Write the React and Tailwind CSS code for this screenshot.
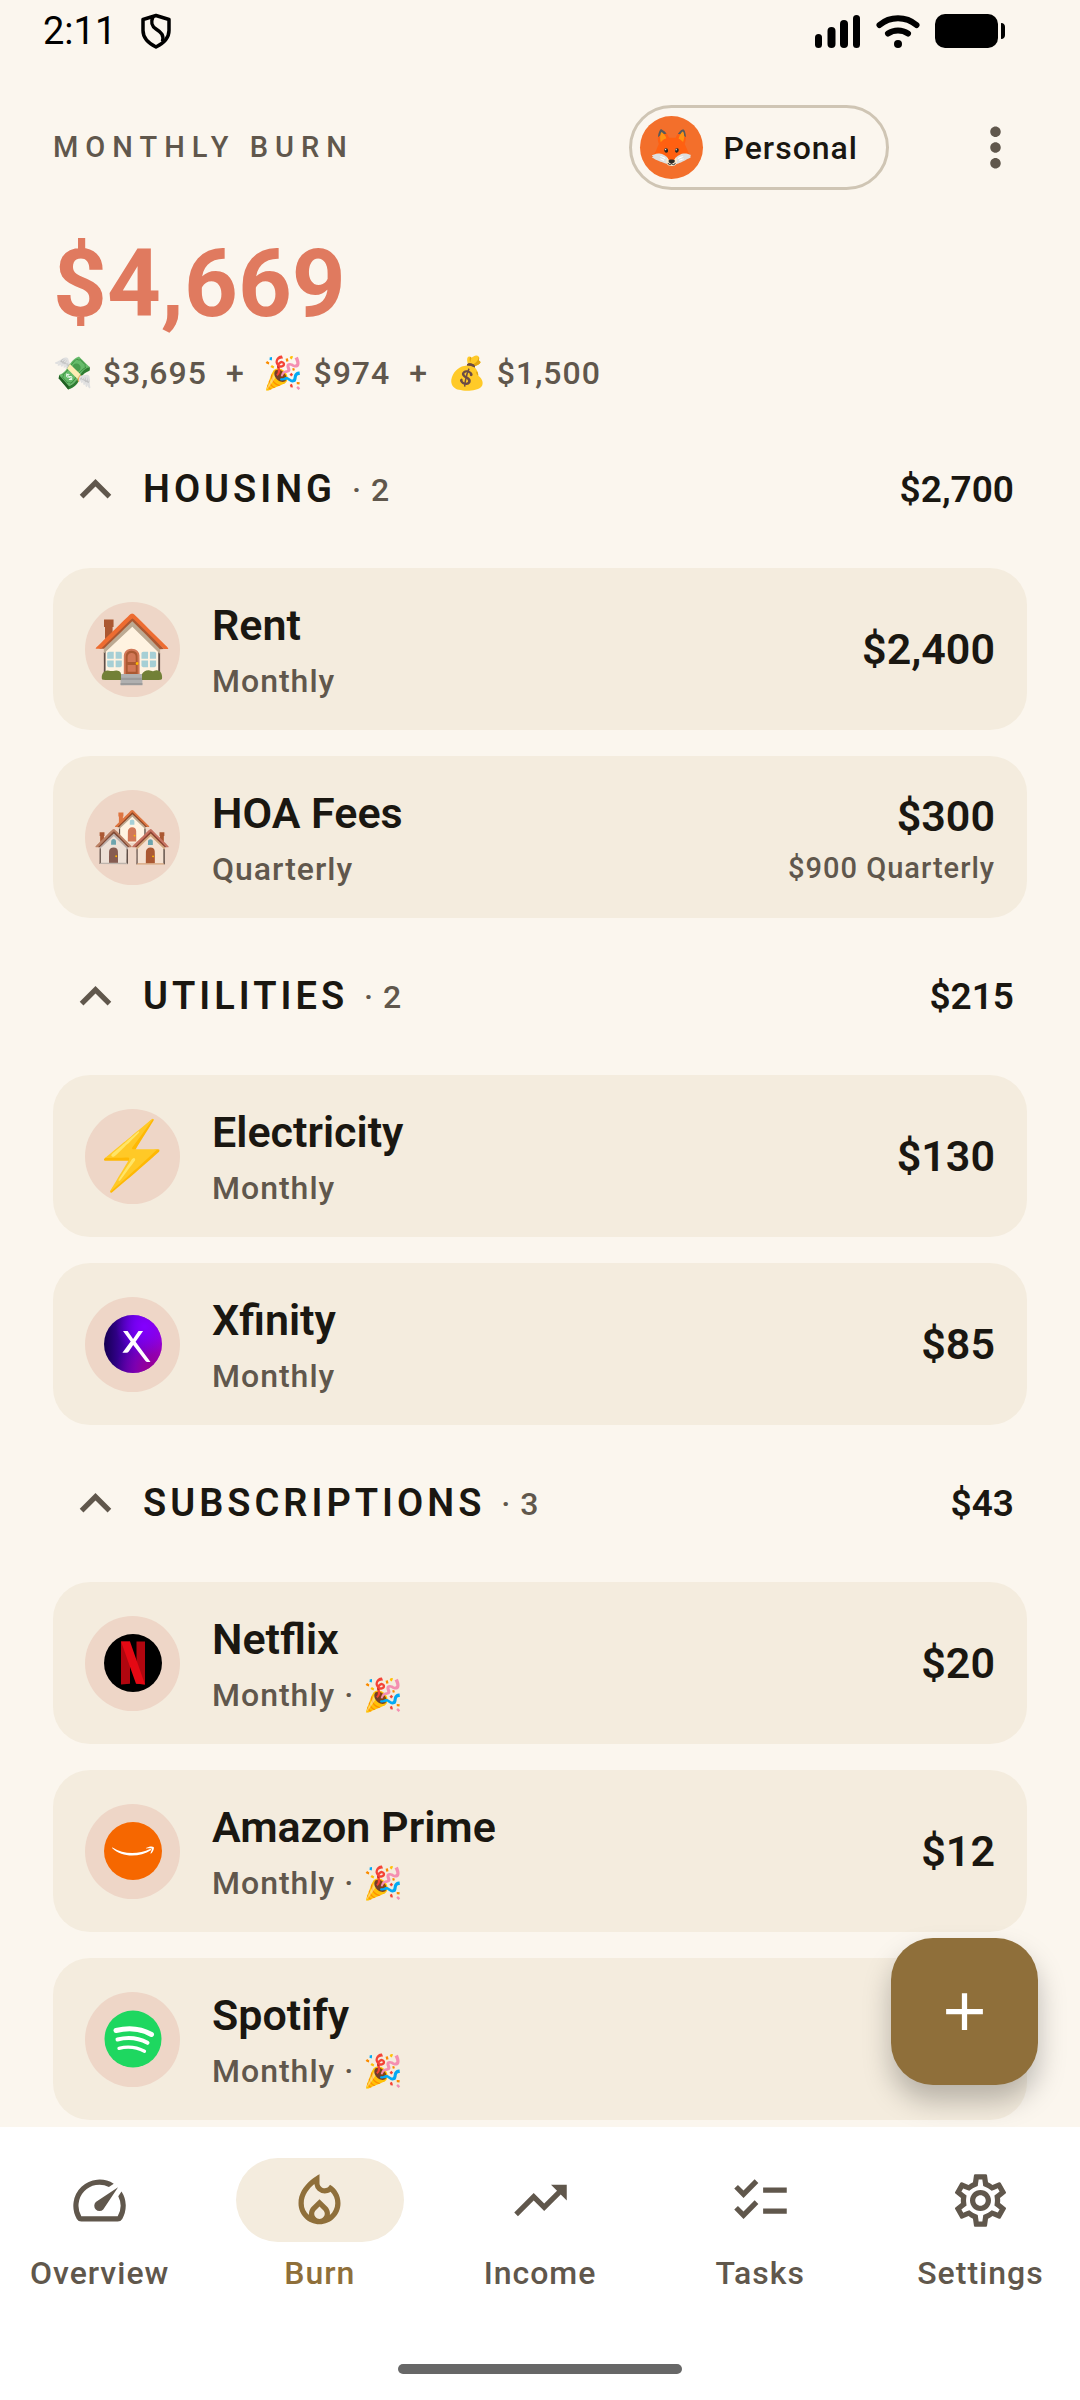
import { useState } from 'react';
import {
    MdAdd,
    MdChecklist,
    MdExpandLess,
    MdMoreVert,
    MdOutlineLocalFireDepartment,
    MdOutlineSettings,
    MdOutlineSpeed,
    MdTrendingUp,
} from 'react-icons/md';

const emojiFont = "font-['Noto_Color_Emoji',sans-serif]";

// Brand logos
function XfinityLogo() {
    return (
        <svg className="size-[58px]" viewBox="0 0 58 58" aria-hidden="true">
            <defs>
                <linearGradient id="xf-base" x1="0" y1="0" x2="1" y2="0">
                    <stop offset="0" stopColor="#140050" />
                    <stop offset="0.55" stopColor="#5a00d8" />
                    <stop offset="1" stopColor="#9a00d0" />
                </linearGradient>
                <radialGradient id="xf-glow" cx="0.7" cy="0.2" r="0.5">
                    <stop offset="0" stopColor="#8400ff" />
                    <stop offset="1" stopColor="#8400ff" stopOpacity="0" />
                </radialGradient>
                <radialGradient id="xf-pink" cx="0.8" cy="0.95" r="0.6">
                    <stop offset="0" stopColor="#9a0090" />
                    <stop offset="1" stopColor="#9a0090" stopOpacity="0" />
                </radialGradient>
            </defs>
            <circle cx="29" cy="29" r="29" fill="url(#xf-base)" />
            <circle cx="29" cy="29" r="29" fill="url(#xf-pink)" />
            <circle cx="29" cy="29" r="29" fill="url(#xf-glow)" />
            <path d="M19 16h4.600l5.500 8 5.400-8h4.600l-7.500 10.800L46.500 47h-3.200a2 2 0 0 1-1.600-.8L29.200 30l-4.400 6.500a3 3 0 0 1-2.400 1.300h-4l8.300-11.300z" fill="#fff" />
        </svg>
    );
}

function NetflixLogo() {
    return (
        <svg className="size-[58px]" viewBox="0 0 58 58" aria-hidden="true">
            <circle cx="29" cy="29" r="29" fill="#000" />
            <path d="M17 7.500h9v42.300l-9 .7zM32.500 7.500H41v43l-8.500-.7z" fill="#b1060f" />
            <path d="M17 7.500h9l15 43c-3-.4-6-.6-9-.7z" fill="#e50914" />
        </svg>
    );
}

function AmazonLogo() {
    return (
        <svg className="size-[58px]" viewBox="0 0 58 58" aria-hidden="true">
            <circle cx="29" cy="29" r="29" fill="#f66700" />
            <path d="M8.500 25.500c11 6.800 25 7.600 38 1.200l.8 1.200C35 36 18 35.500 8.300 26.300c-.4-.5-.2-1 .2-.8z" fill="#fff" />
            <path d="M42 26c2.500-1.800 6.500-2 7.600-1.100.9 1-.3 4.700-2.600 6.700-.4.300-.7.100-.5-.3.700-1.700 1.600-4 1.200-4.700-.6-.7-3.400-.4-5.300-.2-.5 0-.7-.2-.4-.4z" fill="#fff" />
        </svg>
    );
}

function SpotifyLogo() {
    return (
        <svg className="size-[58px]" viewBox="0 0 58 58" aria-hidden="true">
            <circle cx="29" cy="29" r="28.500" fill="#1ed760" />
            <g fill="none" stroke="#fff" strokeLinecap="round">
                <path d="M12 20.500c12-3 25-2 35.500 4" strokeWidth="5" />
                <path d="M13.500 29.500c10-2.500 21-1.500 30 3.300" strokeWidth="4" />
                <path d="M15 38.300c8.500-2 17.500-1.300 25.500 3" strokeWidth="3.300" />
            </g>
        </svg>
    );
}

const sections = [
    {
        name: 'Housing',
        total: '$2,700',
        items: [
            { name: 'Rent', cycle: 'Monthly', amount: '$2,400', emoji: '🏠' },
            { name: 'HOA Fees', cycle: 'Quarterly', amount: '$300', note: '$900 Quarterly', emoji: '🏘️' },
        ],
    },
    {
        name: 'Utilities',
        total: '$215',
        items: [
            { name: 'Electricity', cycle: 'Monthly', amount: '$130', emoji: '⚡' },
            { name: 'Xfinity', cycle: 'Monthly', amount: '$85', logo: <XfinityLogo /> },
        ],
    },
    {
        name: 'Subscriptions',
        total: '$43',
        items: [
            { name: 'Netflix', cycle: 'Monthly', fun: true, amount: '$20', logo: <NetflixLogo /> },
            { name: 'Amazon Prime', cycle: 'Monthly', fun: true, amount: '$12', logo: <AmazonLogo /> },
            { name: 'Spotify', cycle: 'Monthly', fun: true, amount: '$11', logo: <SpotifyLogo /> },
        ],
    },
];

const tabs = [
    { label: 'Overview', icon: <MdOutlineSpeed className="size-[63px]" /> },
    { label: 'Burn', icon: <MdOutlineLocalFireDepartment className="size-[63px]" /> },
    { label: 'Income', icon: <MdTrendingUp className="size-[63px]" /> },
    { label: 'Tasks', icon: <MdChecklist className="size-[63px]" /> },
    { label: 'Settings', icon: <MdOutlineSettings className="size-[63px]" /> },
];

function StatusBar() {
    return (
        <div className="flex h-[62px] items-center pr-[75px] pl-[43px] text-black">
            <span className="text-[38px] leading-none">2:11</span>
            <svg className="ml-6 h-9 w-8" viewBox="0 0 32 36" fill="none" stroke="currentColor" strokeWidth="3.500" strokeLinejoin="round" aria-hidden="true">
                <path d="M16 2.500 29 6.500v11c0 7-5 12.500-13 16.500C8 30 3 24.500 3 17.500v-11z" />
                <path d="M13 3.500c-2.500 6-1.500 9.500 3 12.500 5.500 3.500 8 6 6.500 12.500" />
            </svg>
            <div className="ml-auto flex items-center gap-[15px]">
                <svg className="h-9 w-[46px]" viewBox="0 0 46 36" fill="currentColor" aria-hidden="true">
                    <rect x="0" y="21" width="7" height="14" rx="3.500" />
                    <rect x="12.500" y="14" width="8" height="21" rx="4" />
                    <rect x="25" y="7" width="8" height="28" rx="4" />
                    <rect x="38" y="2" width="7" height="33" rx="3.500" />
                </svg>
                <svg className="h-9 w-11" viewBox="0 0 44 36" fill="none" stroke="currentColor" strokeWidth="6" strokeLinecap="round" aria-hidden="true">
                    <path d="M3.500 12C14 3 30 3 40.500 12" />
                    <path d="M12 20.500c6-4 14-4 20 0" />
                    <circle cx="22" cy="31" r="4" fill="currentColor" stroke="none" />
                </svg>
                <svg className="h-9 w-[70px]" viewBox="0 0 70 36" fill="currentColor" aria-hidden="true">
                    <rect x="0" y="1" width="63" height="34" rx="10" />
                    <path d="M66 10c3 0 4 2 4 4v8c0 2-1 4-4 4z" />
                </svg>
            </div>
        </div>
    );
}

function ExpenseCard({ item }) {
    return (
        <li className="flex min-h-[162px] items-center gap-8 rounded-[37px] bg-[#f4ecde] px-8">
            <div className="flex size-[95px] shrink-0 items-center justify-center rounded-full bg-[#eed6c7]">
                {item.logo || <span className={`${emojiFont} text-[66px] leading-none`}>{item.emoji}</span>}
            </div>
            <div className="flex-1">
                <h3 className="text-[43px] leading-[64px] font-semibold text-[#1a1711]">{item.name}</h3>
                <p className="text-[32px] leading-[48px] font-medium tracking-[1px] text-[#60574c]">
                    {item.cycle}
                    {item.fun && (
                        <>
                            {' · '}
                            <span className={emojiFont}>🎉</span>
                        </>
                    )}
                </p>
            </div>
            <div className="text-right">
                <p className="text-[43px] leading-[62px] font-semibold text-[#1a1711]">{item.amount}</p>
                {item.note && (
                    <p className="text-[29px] leading-[42px] font-medium tracking-[1px] text-[#60574c]">{item.note}</p>
                )}
            </div>
        </li>
    );
}

function Section({ section }) {
    const [open, setOpen] = useState(true);

    return (
        <section>
            <button
                type="button"
                aria-expanded={open}
                onClick={() => setOpen(!open)}
                className="flex h-[157px] w-full items-center pr-[13px] pl-[11px] text-left"
            >
                <MdExpandLess className={open ? 'size-[63px] text-[#60574c]' : 'size-[63px] rotate-180 text-[#60574c]'} />
                <span className="ml-4 text-[38px] font-semibold tracking-[4px] text-[#1a1711] uppercase">{section.name}</span>
                <span className="ml-4 text-[32px] font-medium tracking-[1px] text-[#60574c]">· {section.items.length}</span>
                <span className="ml-auto text-[37px] font-semibold text-[#1a1711]">{section.total}</span>
            </button>
            {open && (
                <ul className="flex flex-col gap-[26px]">
                    {section.items.map((item) => (
                        <ExpenseCard key={item.name} item={item} />
                    ))}
                </ul>
            )}
        </section>
    );
}

export default function App() {
    const [active, setActive] = useState('Burn');

    return (
        <div className="flex min-h-screen flex-col bg-[#fbf6ee] font-[Roboto,sans-serif]">
            <StatusBar />
            <main className="relative flex-1 overflow-hidden px-[53px]">
                <header className="pb-[7px]">
                    <div className="mt-[43px] flex h-[85px] items-center">
                        <h1 className="flex-1 text-[29px] font-medium tracking-[7px] text-[#60574c] uppercase">Monthly burn</h1>
                        <button
                            type="button"
                            className="mr-[75px] flex h-full items-center gap-5 rounded-full border-3 border-[#cfc5b4] pr-7 pl-2 text-[32px] font-medium tracking-[1px] text-[#1a1711]"
                        >
                            <span className={`${emojiFont} flex size-[63px] items-center justify-center rounded-full bg-[#f36f2b] text-[36px] leading-none`}>
                                🦊
                            </span>
                            Personal
                        </button>
                        <button type="button" aria-label="More options" className="text-[#60574c]">
                            <MdMoreVert className="size-[63px]" />
                        </button>
                    </div>
                    <p className="mt-9 text-[94px] leading-[116px] font-bold text-[#e07a5f]">$4,669</p>
                    <p className="text-[32px] leading-[62px] font-medium tracking-[1px] text-[#60574c]">
                        <span className={emojiFont}>💸</span> $3,695
                        <span className="mx-[19px]">+</span>
                        <span className={emojiFont}>🎉</span> $974
                        <span className="mx-[19px]">+</span>
                        <span className={emojiFont}>💰</span> $1,500
                    </p>
                </header>
                {sections.map((section) => (
                    <Section key={section.name} section={section} />
                ))}
                <button
                    type="button"
                    aria-label="Add expense"
                    className="absolute right-[42px] bottom-[42px] flex size-[147px] items-center justify-center rounded-[42px] bg-[#8f6f3a] text-white shadow-[0_16px_28px_rgba(0,0,0,0.25)]"
                >
                    <MdAdd className="size-[63px]" />
                </button>
            </main>
            <nav className="bg-white pt-[31px]">
                <div className="flex gap-[21px]">
                    {tabs.map((tab) => (
                        <button
                            key={tab.label}
                            type="button"
                            aria-current={active === tab.label ? 'page' : undefined}
                            onClick={() => setActive(tab.label)}
                            className={
                                active === tab.label
                                    ? 'flex flex-1 basis-0 flex-col items-center text-[#8f6f3a]'
                                    : 'flex flex-1 basis-0 flex-col items-center text-[#60574c]'
                            }
                        >
                            <span
                                className={
                                    active === tab.label
                                        ? 'flex h-[84px] w-[168px] items-center justify-center rounded-full bg-[#f4ecde]'
                                        : 'flex h-[84px] w-[168px] items-center justify-center'
                                }
                            >
                                {tab.icon}
                            </span>
                            <span className="mt-2 text-[32px] leading-[46px] font-medium tracking-[1px]">{tab.label}</span>
                        </button>
                    ))}
                </div>
                <div className="mx-auto mt-[68px] mb-[26px] h-[10px] w-[284px] rounded-full bg-[#676767]" />
            </nav>
        </div>
    );
}
